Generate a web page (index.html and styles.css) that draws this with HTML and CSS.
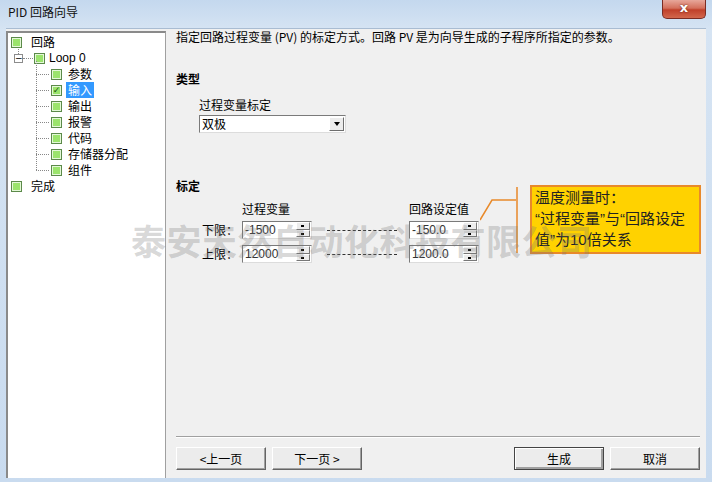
FILE: index.html
```html
<!DOCTYPE html>
<html lang="zh-CN">
<head>
    <meta charset="UTF-8">
    <title>PID 回路向导</title>
    <link rel="stylesheet" href="styles.css">
</head>
<body>
    <div class="window">
        <div class="titlebar">
            <span class="title">PID 回路向导</span>
            <div class="close-btn">x</div>
        </div>
        <div class="client">
            <div class="tree">
                <div class="node root"><span class="chk"></span><span class="label">回路</span></div>
                <div class="node loop">
                    <span class="expander">−</span><span class="chk"></span><span class="label">Loop 0</span>
                </div>
                <div class="children">
                    <div class="node child"><span class="chk"></span><span class="label">参数</span></div>
                    <div class="node child"><span class="chk checked">✓</span><span class="label selected">输入</span></div>
                    <div class="node child"><span class="chk"></span><span class="label">输出</span></div>
                    <div class="node child"><span class="chk"></span><span class="label">报警</span></div>
                    <div class="node child"><span class="chk"></span><span class="label">代码</span></div>
                    <div class="node child"><span class="chk"></span><span class="label">存储器分配</span></div>
                    <div class="node child last"><span class="chk"></span><span class="label">组件</span></div>
                </div>
                <div class="node root"><span class="chk"></span><span class="label">完成</span></div>
            </div>
            <div class="page">
                <p class="desc">指定回路过程变量 (PV) 的标定方式。回路 PV 是为向导生成的子程序所指定的参数。</p>

                <h3 class="group-title type-title">类型</h3>
                <div class="field-label">过程变量标定</div>
                <div class="combo">
                    <span class="combo-value">双极</span>
                    <span class="combo-btn"><span class="tri-down"></span></span>
                </div>

                <h3 class="group-title scale-title">标定</h3>
                <div class="scale-grid">
                    <span></span>
                    <span class="col-head">过程变量</span>
                    <span></span>
                    <span></span>
                    <span></span>
                    <span class="col-head">回路设定值</span>

                    <span class="row-label">下限：</span>
                    <div class="spin"><span class="spin-val">-1500</span><span class="spin-btns"><i class="up"></i><i class="down"></i></span></div>
                    <span></span>
                    <span class="dash"></span>
                    <span></span>
                    <div class="spin"><span class="spin-val">-150.0</span><span class="spin-btns"><i class="up"></i><i class="down"></i></span></div>

                    <span class="row-label">上限：</span>
                    <div class="spin"><span class="spin-val">12000</span><span class="spin-btns"><i class="up"></i><i class="down"></i></span></div>
                    <span></span>
                    <span class="dash"></span>
                    <span></span>
                    <div class="spin"><span class="spin-val">1200.0</span><span class="spin-btns"><i class="up"></i><i class="down"></i></span></div>
                </div>

                <div class="footer">
                    <div class="btn-row">
                        <button class="btn">&lt;上一页</button>
                        <button class="btn">下一页 &gt;</button>
                        <span class="spacer"></span>
                        <button class="btn default">生成</button>
                        <button class="btn">取消</button>
                    </div>
                </div>
            </div>
        </div>

        <!-- annotation callout and watermark lie over the dialog -->
        <svg class="leader" width="60" height="80" viewBox="0 0 60 80">
            <polyline points="0,34 12,14 36,14" fill="none" stroke="#e8892a" stroke-width="1.5"/>
            <line x1="37" y1="1" x2="37" y2="67" stroke="#e8892a" stroke-width="1.5"/>
        </svg>
        <div class="callout">温度测量时：<br>“过程变量”与“回路设定<br>值”为10倍关系</div>
        <div class="watermark">泰安天然自动化科技有限公司</div>
    </div>
</body>
</html>
```

FILE: styles.css
```css
* {
    box-sizing: border-box;
}
body {
    margin: 0;
    width: 712px;
    height: 482px;
    overflow: hidden;
    font-family: "Noto Sans CJK SC", "Liberation Sans", sans-serif;
    font-size: 12px;
    color: #000;
}
.window {
    position: relative;
    width: 712px;
    height: 482px;
    background: linear-gradient(to bottom, #c4d8ee, #d6e4f3 30px, #c9dbef);
    padding: 0 6px 4px 6px;
    display: flex;
    flex-direction: column;
}
.titlebar {
    height: 28px;
    display: flex;
    align-items: center;
    position: relative;
    flex-shrink: 0;
}
.title {
    font-size: 12px;
    padding-left: 2px;
    margin-top: -5px;
    color: #111;
}
.close-btn {
    position: absolute;
    right: 0;
    top: 0;
    width: 44px;
    height: 19px;
    border: 1px solid #7a2c23;
    border-top: none;
    border-radius: 0 0 5px 5px;
    background: linear-gradient(to bottom, #e7a79a, #d4705c 45%, #c0402a 55%, #d2674c);
    color: #fff;
    font-family: "DejaVu Sans", sans-serif;
    font-weight: bold;
    font-size: 13px;
    line-height: 16px;
    text-align: center;
    text-shadow: 0 0 2px #5b1a10;
}
.client {
    flex: 1;
    display: flex;
    background: #f0f0f0;
    border-top: 1px solid #a9bcd2;
    padding-top: 2px;
}

/* tree */
.tree {
    width: 160px;
    background: #fff;
    border-left: 2px solid #8a8a8a;
    border-top: 2px solid #8a8a8a;
    border-right: 1px solid #a0a0a0;
    padding: 1px 0 0 3px;
}
.node {
    height: 16px;
    display: flex;
    align-items: center;
    position: relative;
}
.chk {
    width: 11px;
    height: 11px;
    border: 1px solid #5c8a4a;
    background: #9be46c;
    box-shadow: inset 0 0 0 1px #e4f8d8;
    flex-shrink: 0;
    font-size: 9px;
    line-height: 9px;
    color: #1d5a12;
    text-align: center;
    font-weight: bold;
    font-family: "DejaVu Sans", sans-serif;
}
.label {
    padding: 0 2px;
    line-height: 16px;
    margin-left: 4px;
}
.root .label {
    margin-left: 7px;
}
.loop {
    padding-left: 3px;
}
.loop .label {
    font-family: "Liberation Sans", sans-serif;
    margin-left: 2px;
}
.expander {
    width: 9px;
    height: 9px;
    border: 1px solid #8c8c8c;
    font-size: 9px;
    line-height: 6px;
    text-align: center;
    font-family: "DejaVu Sans", sans-serif;
    margin-right: 11px;
    background: #fff;
    position: relative;
}
.expander::after {
    content: "";
    position: absolute;
    left: 8px;
    top: 3px;
    width: 10px;
    border-top: 1px dotted #888;
}
.expander::before {
    content: "";
    position: absolute;
    left: 3px;
    top: -6px;
    height: 5px;
    border-left: 1px dotted #888;
}
.children {
    margin-left: 25px;
    padding-left: 15px;
    position: relative;
}
.children::before {
    content: "";
    position: absolute;
    left: 0;
    top: -5px;
    height: 109px;
    border-left: 1px dotted #888;
}
.child::before {
    content: "";
    position: absolute;
    left: -15px;
    top: 8px;
    width: 13px;
    border-top: 1px dotted #888;
}
.selected {
    background: #3399ff;
    color: #fff;
}

/* page */
.page {
    flex: 1;
    display: flex;
    flex-direction: column;
    padding: 0 6px 0 10px;
}
.desc {
    margin: -2px 0 0 0;
    line-height: 16px;
}
.group-title {
    margin: 0;
    font-size: 12px;
    font-weight: bold;
    line-height: 16px;
}
.type-title {
    margin-top: 26px;
}
.field-label {
    margin: 10px 0 0 23px;
    line-height: 16px;
}
.combo {
    margin: 2px 0 0 23px;
    width: 147px;
    height: 18px;
    background: #fff;
    border: 1px solid #7a7a7a;
    border-right-color: #dcdcdc;
    border-bottom-color: #dcdcdc;
    display: flex;
    align-items: center;
}
.combo-value {
    flex: 1;
    padding-left: 2px;
    line-height: 16px;
}
.combo-btn {
    width: 15px;
    height: 14px;
    margin-right: 1px;
    background: #ececec;
    border: 1px solid #fff;
    border-right-color: #6e6e6e;
    border-bottom-color: #6e6e6e;
    display: flex;
    align-items: center;
    justify-content: center;
}
.tri-down {
    width: 0;
    height: 0;
    border-left: 3px solid transparent;
    border-right: 3px solid transparent;
    border-top: 4px solid #000;
}
.scale-title {
    margin-top: 45px;
}
.scale-grid {
    margin: 8px 0 0 23px;
    display: grid;
    grid-template-columns: 43px 70px 15px 70px 12px 70px;
    grid-template-rows: 16px 24px 24px;
    align-items: center;
}
.col-head {
    line-height: 16px;
    margin-top: -2px;
}
.row-label {
    line-height: 16px;
    padding-left: 3px;
}
.spin {
    height: 18px;
    background: #fff;
    border: 1px solid #7a7a7a;
    border-right-color: #dcdcdc;
    border-bottom-color: #dcdcdc;
    display: flex;
    font-family: "Liberation Sans", sans-serif;
    font-size: 12px;
    color: #333;
}
.spin-val {
    flex: 1;
    line-height: 16px;
    padding-left: 2px;
}
.spin-btns {
    width: 14px;
    margin: 0 1px 1px 0;
    display: flex;
    flex-direction: column;
}
.spin-btns i {
    flex: 1;
    background: #ececec;
    border: 1px solid #fff;
    border-right-color: #777;
    border-bottom-color: #777;
    position: relative;
}
.spin-btns i::after {
    content: "";
    position: absolute;
    left: 4px;
    top: 2px;
    width: 3px;
    height: 2px;
    background: #000;
}
.dash {
    border-top: 1px dashed #333;
    height: 0;
}
.footer {
    margin-top: auto;
    padding-bottom: 8px;
}
.footer::before {
    content: "";
    display: block;
    border-top: 1px solid #a0a0a0;
    border-bottom: 1px solid #fff;
    margin-bottom: 9px;
}
.btn-row {
    display: flex;
    gap: 6px;
}
.spacer {
    flex: 1;
}
.btn {
    width: 90px;
    height: 23px;
    font-family: inherit;
    font-size: 12px;
    background: #ececec;
    border: 1px solid;
    border-color: #fff #646464 #646464 #fff;
    box-shadow: inset -1px -1px 0 #a0a0a0;
    padding: 0;
    color: #000;
}
.btn.default {
    outline: 1px solid #444;
    outline-offset: -1px;
    box-shadow: inset 1px 1px 0 #fff, inset -2px -2px 0 #a0a0a0;
}

/* annotation */
.leader {
    position: absolute;
    left: 480px;
    top: 186px;
}
.callout {
    position: absolute;
    left: 530px;
    top: 185px;
    width: 171px;
    height: 69px;
    background: #ffd200;
    border: 2px solid #e8892a;
    padding: 0 0 0 3px;
    font-family: "Liberation Sans", "Noto Sans CJK SC", sans-serif;
    font-size: 15px;
    line-height: 21px;
    color: #222;
    white-space: nowrap;
}
.watermark {
    position: absolute;
    left: 131px;
    top: 218px;
    font-size: 35px;
    font-weight: bold;
    line-height: 44px;
    color: rgba(120, 120, 120, 0.3);
    white-space: nowrap;
    pointer-events: none;
    letter-spacing: 0.5px;
}
```
